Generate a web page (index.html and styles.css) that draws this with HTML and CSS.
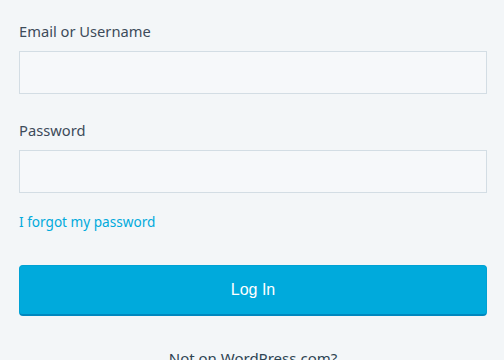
FILE: index.html
```html
<!DOCTYPE html>
<html lang="en">
  <head>
    <meta charset="UTF-8" />
    <meta name="viewport" content="width=device-width, initial-scale=1.0" />
    <title>Log In</title>
    <link rel="stylesheet" href="styles.css">
  </head>
  <body>
    <div class="login-container">
      <form class="login-form">
        <label class="field-label" for="username">Email or Username</label>
        <input class="text-input" type="text" id="username" />
        <label class="field-label" for="password">Password</label>
        <input class="text-input" type="password" id="password" />
        <a class="forgot-link" href="#">I forgot my password</a>
        <button class="login-button" type="button">Log In</button>
      </form>
      <div class="signup-prompt">Not on WordPress.com?</div>
    </div>
  </body>
</html>
```

FILE: styles.css
```css
body {
  font-family: "Noto Sans", "Open Sans", sans-serif;
  background-color: #f3f6f8;
  color: #2e4453;
  margin: 0;
}
.login-container {
  padding: 20px 17px 0 19px;
}
.login-form {
  display: flex;
  flex-direction: column;
}
.field-label {
  display: block;
  font-size: 14.7px;
  line-height: 22px;
  color: #3d4b5a;
  margin-bottom: 9px;
}
.text-input {
  box-sizing: border-box;
  height: 43px;
  margin: 0 0 25px 0;
  padding: 8px 14px;
  background-color: #f6f8fa;
  border: 1px solid #d3dde4;
  border-radius: 0;
  font-size: 15px;
  outline: none;
}
.forgot-link {
  align-self: flex-start;
  font-size: 13.6px;
  line-height: 20px;
  color: #00aadc;
  text-decoration: none;
  margin-top: -6px;
}
.login-button {
  margin-top: 33px;
  height: 51px;
  background-color: #00aadc;
  color: #ffffff;
  border: 1px solid #00a2d4;
  border-bottom: 2px solid #0087be;
  border-radius: 4px;
  font-family: "Liberation Sans", Arial, sans-serif;
  font-size: 16px;
  cursor: pointer;
}
.signup-prompt {
  margin-top: 31px;
  text-align: center;
  font-size: 15px;
  line-height: 22px;
}
```
